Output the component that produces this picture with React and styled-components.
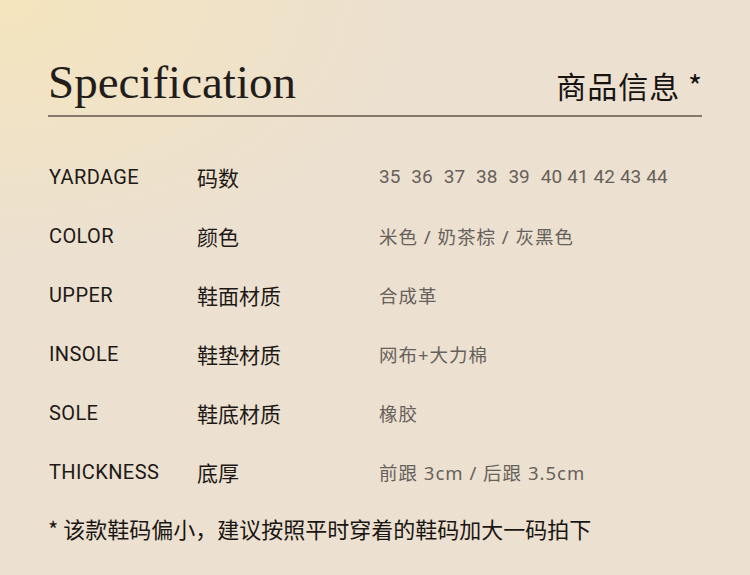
import React from 'react';
import styled, { createGlobalStyle } from 'styled-components';

const GlobalStyle = createGlobalStyle`
    html, body {
        margin: 0;
        padding: 0;
    }
`;

const specs = [
    { en: 'YARDAGE', cn: '码数', sizes: ['35', '36', '37', '38', '39', '40', '41', '42', '43', '44'] },
    { en: 'COLOR', cn: '颜色', value: '米色 / 奶茶棕 / 灰黑色' },
    { en: 'UPPER', cn: '鞋面材质', value: '合成革' },
    { en: 'INSOLE', cn: '鞋垫材质', value: '网布+大力棉' },
    { en: 'SOLE', cn: '鞋底材质', value: '橡胶' },
    { en: 'THICKNESS', cn: '底厚', value: '前跟 3cm / 后跟 3.5cm' },
];

function App() {
    return (
        <Page>
            <GlobalStyle />

            <Header>
                <Title>Specification</Title>
                <SubTitle>商品信息 *</SubTitle>
            </Header>

            <SpecList>
                {specs.map((row) => (
                    <SpecRow key={row.en}>
                        <EnLabel>{row.en}</EnLabel>
                        <CnLabel>{row.cn}</CnLabel>
                        {row.sizes ? (
                            <Sizes>
                                {row.sizes.map((s, i) => (
                                    <Size key={s} $wide={i < 5}>{s}</Size>
                                ))}
                            </Sizes>
                        ) : (
                            <Value>{row.value}</Value>
                        )}
                    </SpecRow>
                ))}
            </SpecList>

            <Note>* 该款鞋码偏小，建议按照平时穿着的鞋码加大一码拍下</Note>
        </Page>
    )
}

export default App

const Page = styled.div`
    width: 750px;
    height: 575px;
    box-sizing: border-box;
    padding: 0 48px;
    overflow: hidden;
    background:
        radial-gradient(ellipse 420px 260px at 0 0, rgba(246, 230, 186, 0.85), rgba(246, 230, 186, 0) 100%),
        #ece0d0;
`;

const Header = styled.div`
    display: flex;
    justify-content: space-between;
    align-items: flex-end;
    padding-top: 58px;
    padding-bottom: 9px;
    border-bottom: 2px solid #86796b;
`;

const Title = styled.h1`
    margin: 0;
    font-family: "Liberation Serif", serif;
    font-weight: 400;
    font-size: 47px;
    line-height: 48px;
    color: #221d1a;
`;

const SubTitle = styled.div`
    font-family: "Noto Sans CJK SC", sans-serif;
    font-size: 30px;
    line-height: 30px;
    color: #161310;
    letter-spacing: 1px;
    margin-right: -1px;
    margin-bottom: 6px;
`;

const SpecList = styled.div`
    margin-top: 30px;
    display: flex;
    flex-direction: column;
`;

const SpecRow = styled.div`
    display: grid;
    grid-template-columns: 149px 182px 1fr;
    align-items: center;
    height: 59px;
`;

const EnLabel = styled.div`
    font-family: Roboto, "Liberation Sans", sans-serif;
    font-size: 20px;
    color: #1d1916;
    letter-spacing: 0.4px;
    padding-left: 1px;
`;

const CnLabel = styled.div`
    font-family: "Noto Sans CJK SC", sans-serif;
    font-size: 21px;
    color: #1d1916;
`;

const Value = styled.div`
    font-family: "Noto Sans", "Noto Sans CJK SC", sans-serif;
    font-size: 18.5px;
    color: #67615b;
    letter-spacing: 1px;
`;

const Sizes = styled.div`
    display: flex;
    font-family: Roboto, "Liberation Sans", sans-serif;
    font-size: 19px;
    color: #67615b;
`;

const Size = styled.span`
    margin-right: ${(p) => (p.$wide ? '11px' : '5px')};
`;

const Note = styled.div`
    margin-top: 12px;
    font-family: "Noto Sans CJK SC", sans-serif;
    font-size: 22px;
    line-height: 30px;
    color: #1a1613;
`;
